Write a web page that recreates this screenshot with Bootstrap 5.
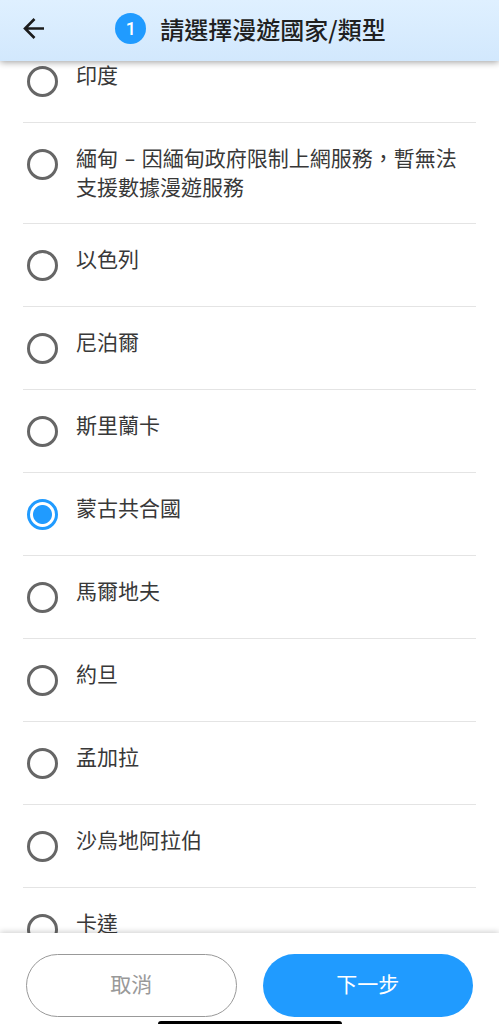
<!DOCTYPE html>
<html lang="zh-Hant">
<head>
<meta charset="utf-8">
<meta name="viewport" content="width=device-width, initial-scale=1">
<title>請選擇漫遊國家/類型</title>
<link href="https://cdn.jsdelivr.net/npm/bootstrap@5.3.0/dist/css/bootstrap.min.css" rel="stylesheet">
<style>
  :root { --brand: #209bff; }
  body { font-family: "Noto Sans CJK TC", sans-serif; font-size: 21px; line-height: 29px; color: #383838; }
  .app-header { height: 61px; padding: 0 18px 4px; background: linear-gradient(#dff0ff, #d2e8fd); box-shadow: 0 1px 7px rgba(0, 0, 0, .4); z-index: 2; }
  .back-btn { width: 32px; height: 32px; color: #1c1c1c; }
  .title-group { gap: 14px; padding-right: 30px; }
  .page-title { font-size: 24px; line-height: 32px; color: #202020; font-weight: 500; }
  .step-dot { width: 31px; height: 31px; background: var(--brand); font-size: 18px; font-family: Roboto, sans-serif; font-weight: 500; }
  .country-scroll { scrollbar-width: none; }
  .country-scroll::-webkit-scrollbar { display: none; }
  .country-list { margin: -21px 23px 0; }
  .country-item { min-height: 83px; padding: 22px 4px 20px; border-bottom: 1px solid #e4e4e4; gap: 18px; }
  .country-item label { font-family: "DejaVu Sans", "Noto Sans CJK TC", sans-serif; }
  .country-item .form-check-input { width: 31px; height: 31px; margin: 4px 0 0; border: 3px solid #666; }
  .country-item .form-check-input:checked { border-color: var(--brand); background: radial-gradient(circle, var(--brand) 9px, #fff 10px); }
  .app-footer { padding: 21px 26px 7px; gap: 26px; box-shadow: 0 -1px 6px rgba(0, 0, 0, .2); z-index: 2; }
  .app-footer .btn { height: 63px; font-size: 21px; padding-bottom: 10px; }
  .btn-cancel { --bs-btn-color: #999; --bs-btn-border-color: #999; --bs-btn-hover-border-color: #777; }
  .btn-next { --bs-btn-color: #fff; --bs-btn-bg: var(--brand); --bs-btn-hover-color: #fff; --bs-btn-hover-bg: #0c89ee; }
  .home-bar { width: 184px; height: 3px; border-radius: 3px 3px 0 0; background: #000; }
</style>
</head>
<body>
<div class="d-flex flex-column vh-100 overflow-hidden bg-white">
  <header class="app-header d-flex align-items-center flex-shrink-0 position-relative">
    <button type="button" class="back-btn btn p-0 border-0 d-flex" aria-label="返回">
      <svg width="32" height="32" viewBox="0 0 32 32" fill="none" stroke="currentColor" stroke-width="2.6" aria-hidden="true"><path d="M26 15.500H7M16.500 6L7 15.500L16.500 25"/></svg>
    </button>
    <div class="title-group flex-grow-1 d-flex justify-content-center align-items-center">
      <span class="step-dot rounded-circle text-white d-flex align-items-center justify-content-center">1</span>
      <h1 class="page-title m-0 text-nowrap">請選擇漫遊國家/類型</h1>
    </div>
  </header>

  <main class="country-scroll flex-grow-1 overflow-auto">
    <div class="country-list" role="radiogroup" aria-label="漫遊國家">
      <div class="country-item d-flex align-items-start"><input class="form-check-input flex-shrink-0" type="radio" name="country" id="c1"><label for="c1">印度</label></div>
      <div class="country-item d-flex align-items-start"><input class="form-check-input flex-shrink-0" type="radio" name="country" id="c2"><label for="c2">緬甸 – 因緬甸政府限制上網服務，暫無法支援數據漫遊服務</label></div>
      <div class="country-item d-flex align-items-start"><input class="form-check-input flex-shrink-0" type="radio" name="country" id="c3"><label for="c3">以色列</label></div>
      <div class="country-item d-flex align-items-start"><input class="form-check-input flex-shrink-0" type="radio" name="country" id="c4"><label for="c4">尼泊爾</label></div>
      <div class="country-item d-flex align-items-start"><input class="form-check-input flex-shrink-0" type="radio" name="country" id="c5"><label for="c5">斯里蘭卡</label></div>
      <div class="country-item d-flex align-items-start"><input class="form-check-input flex-shrink-0" type="radio" name="country" id="c6" checked><label for="c6">蒙古共合國</label></div>
      <div class="country-item d-flex align-items-start"><input class="form-check-input flex-shrink-0" type="radio" name="country" id="c7"><label for="c7">馬爾地夫</label></div>
      <div class="country-item d-flex align-items-start"><input class="form-check-input flex-shrink-0" type="radio" name="country" id="c8"><label for="c8">約旦</label></div>
      <div class="country-item d-flex align-items-start"><input class="form-check-input flex-shrink-0" type="radio" name="country" id="c9"><label for="c9">孟加拉</label></div>
      <div class="country-item d-flex align-items-start"><input class="form-check-input flex-shrink-0" type="radio" name="country" id="c10"><label for="c10">沙烏地阿拉伯</label></div>
      <div class="country-item d-flex align-items-start"><input class="form-check-input flex-shrink-0" type="radio" name="country" id="c11"><label for="c11">卡達</label></div>
    </div>
  </main>

  <footer class="app-footer d-flex flex-shrink-0 position-relative bg-white">
    <button type="button" class="btn btn-cancel rounded-pill flex-fill w-50">取消</button>
    <button type="button" class="btn btn-next rounded-pill flex-fill w-50">下一步</button>
    <div class="home-bar position-absolute bottom-0 start-50 translate-middle-x"></div>
  </footer>
</div>
<script src="https://cdn.jsdelivr.net/npm/bootstrap@5.3.0/dist/js/bootstrap.bundle.min.js"></script>
</body>
</html>
